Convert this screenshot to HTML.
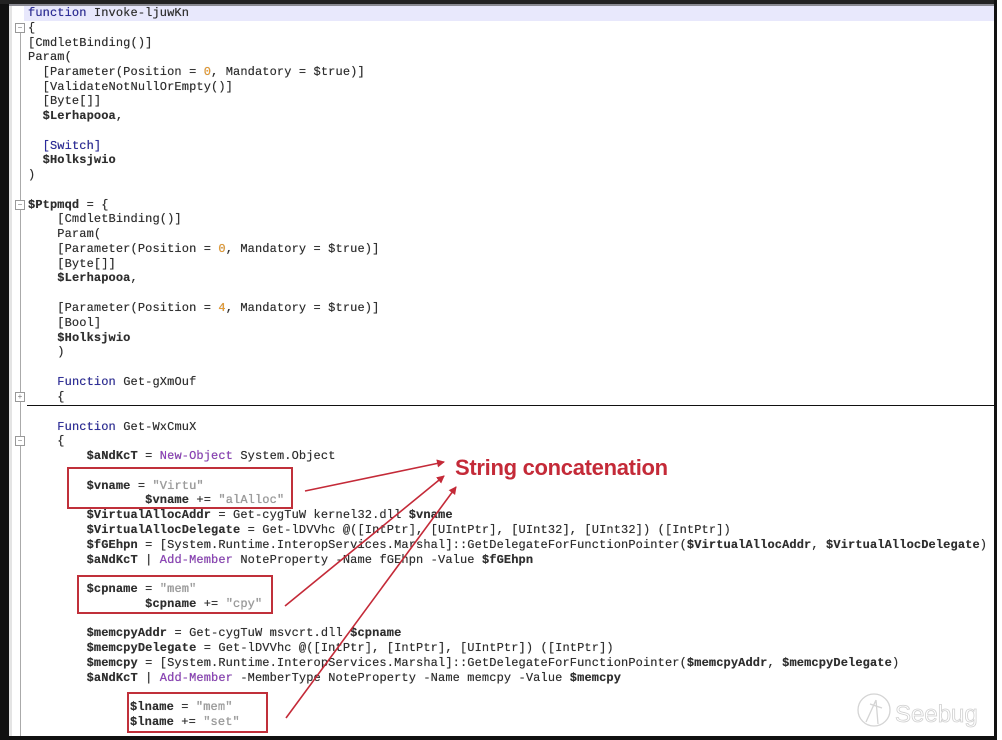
<!DOCTYPE html>
<html><head><meta charset="utf-8"><style>
html,body{margin:0;padding:0;}
body{width:1002px;height:740px;position:relative;overflow:hidden;background:#fff;font-family:"Liberation Mono",monospace;}
.l{position:absolute;left:28px;height:15px;line-height:15px;font-size:12px;letter-spacing:0.12px;color:#2e2e2e;white-space:pre;text-shadow:0 0 0.4px #444;}
.k{color:#2a2aa0}
.n{color:#f0a030}
.s{color:#a0a0a0}
.p{color:#9040c0}
.v{font-weight:bold}
.box{position:absolute;border:2px solid #c0303a;box-sizing:border-box;}
.fold{position:absolute;left:15px;width:8px;height:8px;border:1px solid #999;background:#fff;font-size:8px;line-height:8px;text-align:center;color:#777;font-family:"Liberation Sans",sans-serif;}
</style></head><body>
<div style="position:absolute;left:0;top:0;width:9px;height:740px;background:#111"></div>
<div style="position:absolute;left:0;top:0;width:1002px;height:4px;background:#222"></div>
<div style="position:absolute;left:9px;top:4px;width:986px;height:2px;background:#8a8a92"></div>
<div style="position:absolute;left:994px;top:0;width:3px;height:740px;background:#111"></div>
<div style="position:absolute;left:997px;top:0;width:5px;height:740px;background:#fff"></div>
<div style="position:absolute;left:0;top:736px;width:997px;height:4px;background:#111"></div>
<div style="position:absolute;left:9px;top:6px;width:3px;height:730px;background:#e4e4e4"></div>
<div style="position:absolute;left:20px;top:25px;width:1px;height:711px;background:#aaa"></div>
<div style="position:absolute;left:24px;top:6px;width:970px;height:15px;background:#e8e8fc"></div>
<div style="position:absolute;left:27px;top:405px;width:967px;height:1px;background:#111"></div>

<div class="fold" style="top:23px">−</div>
<div class="fold" style="top:200px">−</div>
<div class="fold" style="top:392px">+</div>
<div class="fold" style="top:436px">−</div>

<div class="l" style="top:6px"><span class="k">function</span> Invoke-ljuwKn</div>
<div class="l" style="top:21px">{</div>
<div class="l" style="top:36px">[CmdletBinding()]</div>
<div class="l" style="top:50px">Param(</div>
<div class="l" style="top:65px">  [Parameter(Position = <span class="n">0</span>, Mandatory = $true)]</div>
<div class="l" style="top:80px">  [ValidateNotNullOrEmpty()]</div>
<div class="l" style="top:94px">  [Byte[]]</div>
<div class="l" style="top:109px">  <span class="v">$Lerhapooa</span>,</div>
<div class="l" style="top:139px">  <span class="k">[Switch]</span></div>
<div class="l" style="top:153px">  <span class="v">$Holksjwio</span></div>
<div class="l" style="top:168px">)</div>
<div class="l" style="top:198px"><span class="v">$Ptpmqd</span> = {</div>
<div class="l" style="top:212px">    [CmdletBinding()]</div>
<div class="l" style="top:227px">    Param(</div>
<div class="l" style="top:242px">    [Parameter(Position = <span class="n">0</span>, Mandatory = $true)]</div>
<div class="l" style="top:257px">    [Byte[]]</div>
<div class="l" style="top:271px">    <span class="v">$Lerhapooa</span>,</div>
<div class="l" style="top:301px">    [Parameter(Position = <span class="n">4</span>, Mandatory = $true)]</div>
<div class="l" style="top:316px">    [Bool]</div>
<div class="l" style="top:331px">    <span class="v">$Holksjwio</span></div>
<div class="l" style="top:345px">    )</div>
<div class="l" style="top:375px">    <span class="k">Function</span> Get-gXmOuf</div>
<div class="l" style="top:390px">    {</div>
<div class="l" style="top:420px">    <span class="k">Function</span> Get-WxCmuX</div>
<div class="l" style="top:434px">    {</div>
<div class="l" style="top:449px">        <span class="v">$aNdKcT</span> = <span class="p">New-Object</span> System.Object</div>
<div class="l" style="top:479px">        <span class="v">$vname</span> = <span class="s">"Virtu"</span></div>
<div class="l" style="top:493px">                <span class="v">$vname</span> += <span class="s">"alAlloc"</span></div>
<div class="l" style="top:508px">        <span class="v">$VirtualAllocAddr</span> = Get-cygTuW kernel32.dll <span class="v">$vname</span></div>
<div class="l" style="top:523px">        <span class="v">$VirtualAllocDelegate</span> = Get-lDVVhc @([IntPtr], [UIntPtr], [UInt32], [UInt32]) ([IntPtr])</div>
<div class="l" style="top:538px">        <span class="v">$fGEhpn</span> = [System.Runtime.InteropServices.Marshal]::GetDelegateForFunctionPointer(<span class="v">$VirtualAllocAddr</span>, <span class="v">$VirtualAllocDelegate</span>)</div>
<div class="l" style="top:553px">        <span class="v">$aNdKcT</span> | <span class="p">Add-Member</span> NoteProperty -Name fGEhpn -Value <span class="v">$fGEhpn</span></div>
<div class="l" style="top:582px">        <span class="v">$cpname</span> = <span class="s">"mem"</span></div>
<div class="l" style="top:597px">                <span class="v">$cpname</span> += <span class="s">"cpy"</span></div>
<div class="l" style="top:626px">        <span class="v">$memcpyAddr</span> = Get-cygTuW msvcrt.dll <span class="v">$cpname</span></div>
<div class="l" style="top:641px">        <span class="v">$memcpyDelegate</span> = Get-lDVVhc @([IntPtr], [IntPtr], [UIntPtr]) ([IntPtr])</div>
<div class="l" style="top:656px">        <span class="v">$memcpy</span> = [System.Runtime.InteropServices.Marshal]::GetDelegateForFunctionPointer(<span class="v">$memcpyAddr</span>, <span class="v">$memcpyDelegate</span>)</div>
<div class="l" style="top:671px">        <span class="v">$aNdKcT</span> | <span class="p">Add-Member</span> -MemberType NoteProperty -Name memcpy -Value <span class="v">$memcpy</span></div>
<div class="l" style="top:700px;left:130px"><span class="v">$lname</span> = <span class="s">"mem"</span></div>
<div class="l" style="top:715px;left:130px"><span class="v">$lname</span> += <span class="s">"set"</span></div>

<div class="box" style="left:67px;top:467px;width:226px;height:42px"></div>
<div class="box" style="left:77px;top:575px;width:196px;height:39px"></div>
<div class="box" style="left:127px;top:692px;width:141px;height:41px"></div>

<div style="position:absolute;left:455px;top:455px;font:bold 22px 'Liberation Sans',sans-serif;color:#c42a38;white-space:nowrap;letter-spacing:-0.3px">String concatenation</div>

<svg style="position:absolute;left:0;top:0" width="1002" height="740">
<defs><marker id="a" markerWidth="8" markerHeight="8" refX="7" refY="4" orient="auto" markerUnits="userSpaceOnUse"><path d="M0,0 L8,4 L0,8 z" fill="#c42a38"/></marker></defs>
<g stroke="#c42a38" stroke-width="1.6" fill="none">
<line x1="305" y1="491" x2="444" y2="462" marker-end="url(#a)"/>
<line x1="285" y1="606" x2="444" y2="476" marker-end="url(#a)"/>
<line x1="286" y1="718" x2="456" y2="487" marker-end="url(#a)"/>
</g>
<g stroke="#d4d4d4" stroke-width="1.3" fill="none">
<circle cx="874" cy="710" r="16"/>
<path d="M866,722 L876,700 M870,704 L882,708 M876,700 L878,724"/>
</g>
<text x="895" y="722" font-family="Liberation Sans,sans-serif" font-size="24" fill="#fff" stroke="#d0d0d0" stroke-width="0.8">Seebug</text>
</svg>
</body></html>
